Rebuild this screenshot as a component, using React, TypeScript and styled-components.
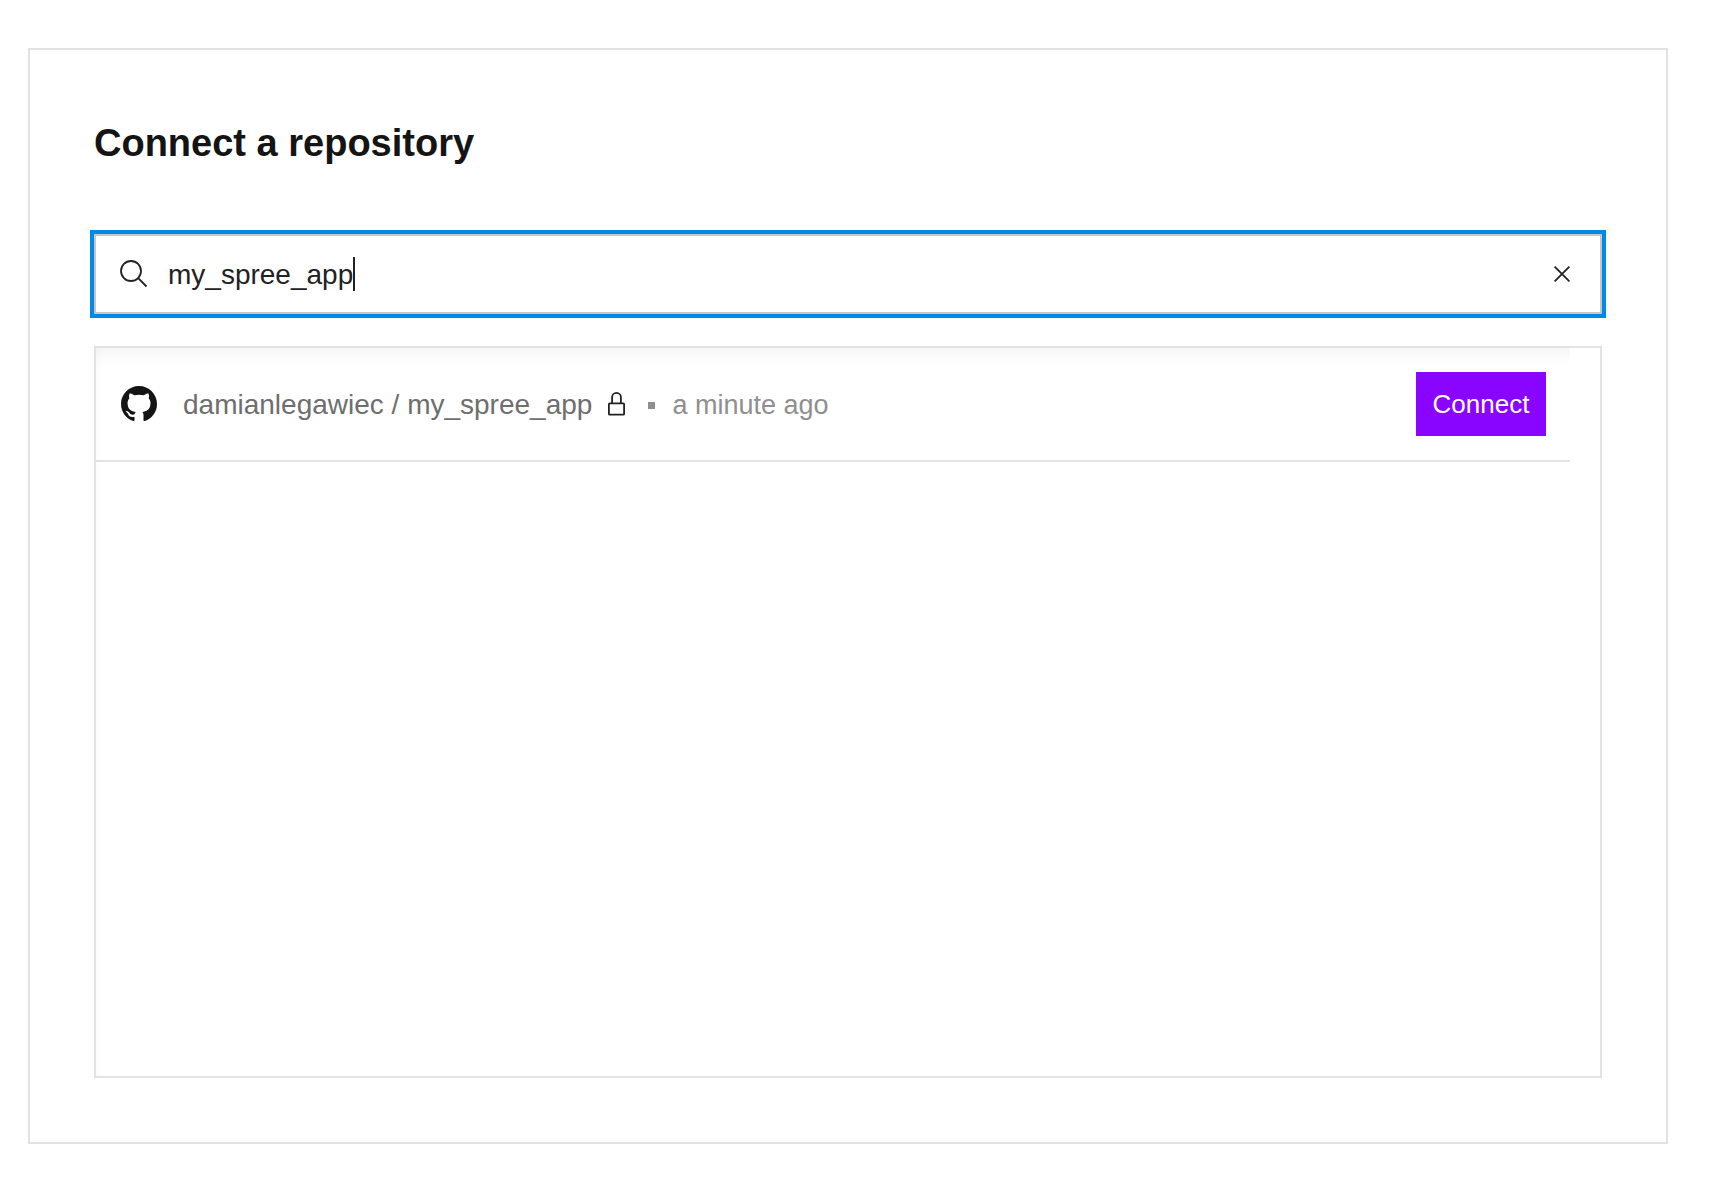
import React, { useState } from "react";
import styled, { createGlobalStyle } from "styled-components";

const GlobalStyle = createGlobalStyle`
  *, *::before, *::after { box-sizing: border-box; }
  body {
    margin: 0;
    background: #fff;
    color: #141414;
    font-family: "Liberation Sans", Arial, Helvetica, sans-serif;
  }
  button, input { font: inherit; }
`;

const Page = styled.main`
  padding: 48px 46px 40px 28px;
`;

const Card = styled.section`
  padding: 64px;
  border: 2px solid #e2e2e2;
  background: #fff;
`;

const Title = styled.h1`
  margin: 0 0 62px;
  font-size: 38px;
  line-height: 58px;
  font-weight: 700;
`;

const SearchField = styled.div`
  display: flex;
  align-items: center;
  height: 80px;
  margin-bottom: 32px;
  padding: 0 20px 0 24px;
  border: 2px solid #c6c6c6;
  outline: 4px solid #008ae6;
  color: #222;
`;

const SearchLabel = styled.label`
  display: flex;
  margin-right: 20px;
`;

const SearchInput = styled.input`
  field-sizing: content;
  min-width: 2px;
  padding: 2px 0 0;
  border: 0;
  outline: 0;
  background: transparent;
  color: inherit;
  caret-color: transparent;
  font-size: 28px;
  line-height: 34px;
`;

const Caret = styled.span`
  width: 2px;
  height: 34px;
  background: #222;
`;

const ClearButton = styled.button`
  display: flex;
  align-items: center;
  justify-content: center;
  width: 36px;
  height: 36px;
  margin-left: auto;
  padding: 0;
  border: 0;
  background: transparent;
  color: inherit;
`;

const ListPanel = styled.div`
  display: flex;
  min-height: 732px;
  padding-right: 30px;
  border: 2px solid #e2e2e2;
`;

const RepoList = styled.ul`
  flex: 1;
  margin: 0;
  padding: 0;
  list-style: none;
  box-shadow:
    inset 0 20px 20px -20px rgba(0, 0, 0, 0.08),
    inset 12px 0 12px -12px rgba(0, 0, 0, 0.03);
`;

const RepoRow = styled.li`
  display: flex;
  align-items: center;
  height: 114px;
  padding: 0 24px 0 25px;
  border-bottom: 2px solid #e2e2e2;
`;

const RepoName = styled.span`
  margin: 0 16px 0 26px;
  padding-top: 2px;
  color: #6e6e6e;
  font-size: 28px;
  line-height: 34px;
`;

const Dot = styled.span`
  width: 7px;
  height: 7px;
  margin: 2px 17px 0 23px;
  background: #8f8f8f;
`;

const UpdatedAt = styled.time`
  padding-top: 2px;
  color: #8f8f8f;
  font-size: 27px;
  line-height: 34px;
`;

const ConnectButton = styled.button`
  width: 130px;
  height: 64px;
  margin-left: auto;
  padding: 0;
  border: 0;
  background: #8a05ff;
  color: #fff;
  font-size: 26px;
  line-height: 34px;
`;

const SearchIcon = () => (
  <svg width="28" height="28" viewBox="0 0 28 28" fill="none" stroke="currentColor" strokeWidth="1.8" aria-hidden="true">
    <circle cx="11" cy="11" r="10" />
    <path d="M18.2 18.2 26.5 26.5" />
  </svg>
);

const CloseIcon = () => (
  <svg width="16" height="16" viewBox="0 0 16 16" fill="none" stroke="currentColor" strokeWidth="1.8" aria-hidden="true">
    <path d="M.6.6 15.4 15.4M15.4.6.6 15.4" />
  </svg>
);

const LockIcon = () => (
  <svg width="17" height="24" viewBox="0 0 17 24" fill="none" stroke="#222" strokeWidth="1.8" role="img" aria-label="Private">
    <rect x="0.9" y="11.3" width="15.2" height="11.4" rx="0.8" />
    <path d="M4.1 11.3V5.3a4.4 4.4 0 0 1 8.8 0v6" />
  </svg>
);

const GitHubIcon = () => (
  <svg width="36" height="36" viewBox="0 0 16 16" fill="#141414" role="img" aria-label="GitHub">
    <path d="M8 0C3.58 0 0 3.58 0 8c0 3.54 2.29 6.53 5.47 7.59.4.07.55-.17.55-.38 0-.19-.01-.82-.01-1.49-2.01.37-2.53-.49-2.69-.94-.09-.23-.48-.94-.82-1.13-.28-.15-.68-.52-.01-.53.63-.01 1.08.58 1.23.82.72 1.21 1.87.87 2.33.66.07-.52.28-.87.51-1.07-1.78-.2-3.64-.89-3.64-3.95 0-.87.31-1.59.82-2.15-.08-.2-.36-1.02.08-2.12 0 0 .67-.21 2.2.82.64-.18 1.32-.27 2-.27s1.36.09 2 .27c1.53-1.04 2.2-.82 2.2-.82.44 1.1.16 1.92.08 2.12.51.56.82 1.27.82 2.15 0 3.07-1.87 3.75-3.65 3.95.29.25.54.73.54 1.48 0 1.07-.01 1.93-.01 2.2 0 .21.15.46.55.38A8.01 8.01 0 0 0 16 8c0-4.42-3.58-8-8-8Z" />
  </svg>
);

const repositories = [
  { owner: "damianlegawiec", name: "my_spree_app", updated: "a minute ago" },
];

export default function App() {
  const [query, setQuery] = useState("my_spree_app");
  const matches = repositories.filter((repo) => repo.name.includes(query));

  return (
    <>
      <GlobalStyle />
      <Page>
        <Card>
          <Title>Connect a repository</Title>
          <SearchField>
            <SearchLabel htmlFor="repo-search" aria-label="Search repositories">
              <SearchIcon />
            </SearchLabel>
            <SearchInput
              id="repo-search"
              type="text"
              value={query}
              onChange={(event) => setQuery(event.target.value)}
            />
            <Caret />
            <ClearButton type="button" aria-label="Clear search" onClick={() => setQuery("")}>
              <CloseIcon />
            </ClearButton>
          </SearchField>
          <ListPanel>
            <RepoList>
              {matches.map((repo) => (
                <RepoRow key={repo.name}>
                  <GitHubIcon />
                  <RepoName>
                    {repo.owner} / {repo.name}
                  </RepoName>
                  <LockIcon />
                  <Dot />
                  <UpdatedAt>{repo.updated}</UpdatedAt>
                  <ConnectButton type="button">Connect</ConnectButton>
                </RepoRow>
              ))}
            </RepoList>
          </ListPanel>
        </Card>
      </Page>
    </>
  );
}
